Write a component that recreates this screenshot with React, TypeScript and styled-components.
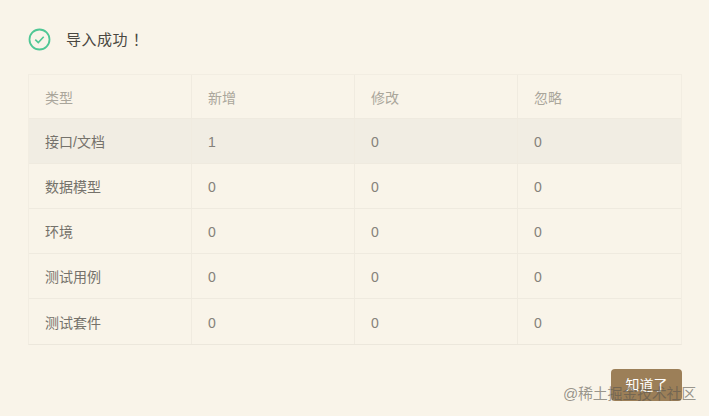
import React from "react";
import styled, { createGlobalStyle } from "styled-components";

const Global = createGlobalStyle`
  html, body { margin: 0; padding: 0; background: #f9f4e9; }
  body { font-family: "Liberation Sans", "Noto Sans CJK SC", sans-serif; }
`;

const Page = styled.div`
  position: relative;
  width: 709px;
  height: 416px;
  overflow: hidden;
  box-sizing: border-box;
  padding: 28px 27px 0 28px;
  background: #f9f4e9;
`;

const Header = styled.div`
  display: flex;
  align-items: center;
  gap: 15px;
  height: 22px;
  margin-bottom: 24px;
`;

const Title = styled.div`
  font-size: 15px;
  line-height: 22px;
  color: #4a4741;
  letter-spacing: 0.5px;
`;

const Bang = styled.span`
  font-family: "Noto Sans CJK TC", sans-serif;
  margin-left: 1px;
`;

const Table = styled.div`
  border: 1px solid #f2ede2;
  border-bottom-color: #ece7dc;
`;

const Row = styled.div<{ $active?: boolean; $last?: boolean; $head?: boolean }>`
  display: grid;
  grid-template-columns: 163px 163px 163px 163px;
  height: ${(p) => (p.$head ? "44px" : "45px")};
  box-sizing: border-box;
  background: ${(p) => (p.$active ? "#f1ede3" : "transparent")};
  border-bottom: ${(p) => (p.$last ? "none" : "1px solid #efeadf")};
`;

const Cell = styled.div<{ $head?: boolean; $num?: boolean }>`
  display: flex;
  align-items: center;
  padding-left: 16px;
  padding-top: ${(p) => (p.$num ? "2px" : "0")};
  box-sizing: border-box;
  font-size: 14px;
  color: ${(p) => (p.$head ? "#aaa69b" : p.$num ? "#85827a" : "#75726b")};
  border-right: 1px solid #f0ebe0;
  &:last-child { border-right: none; }
`;

const Footer = styled.div`
  display: flex;
  justify-content: flex-end;
  margin-top: 24px;
`;

const Button = styled.button`
  width: 71px;
  height: 32px;
  border: none;
  border-radius: 4px;
  background: #9c7f58;
  color: #fff;
  font-family: inherit;
  font-size: 14px;
  line-height: 32px;
  padding: 0;
`;

const Watermark = styled.div`
  position: absolute;
  right: 13px;
  top: 384px;
  font-size: 15px;
  line-height: 20px;
  letter-spacing: -0.25px;
  color: rgba(90, 86, 78, 0.62);
`;

const rows = [
  ["接口/文档", "1", "0", "0"],
  ["数据模型", "0", "0", "0"],
  ["环境", "0", "0", "0"],
  ["测试用例", "0", "0", "0"],
  ["测试套件", "0", "0", "0"],
];

export default function App() {
  return (
    <Page>
      <Global />
      <Header>
        <svg width="23" height="23" viewBox="0 0 23 23" fill="none">
          <circle cx="11.5" cy="11.5" r="10" stroke="#4fc795" strokeWidth="1.8" />
          <path d="M7.3 11.6l3 3 5.4-5.8" stroke="#4fc795" strokeWidth="1.6" />
        </svg>
        <Title>导入成功<Bang>！</Bang></Title>
      </Header>
      <Table>
        <Row $head>
          {["类型", "新增", "修改", "忽略"].map((h) => (
            <Cell key={h} $head>{h}</Cell>
          ))}
        </Row>
        {rows.map((r, i) => (
          <Row key={r[0]} $active={i === 0} $last={i === rows.length - 1}>
            {r.map((c, j) => (
              <Cell key={j} $num={j > 0}>{c}</Cell>
            ))}
          </Row>
        ))}
      </Table>
      <Footer>
        <Button>知道了</Button>
      </Footer>
      <Watermark>@稀土掘金技术社区</Watermark>
    </Page>
  );
}
